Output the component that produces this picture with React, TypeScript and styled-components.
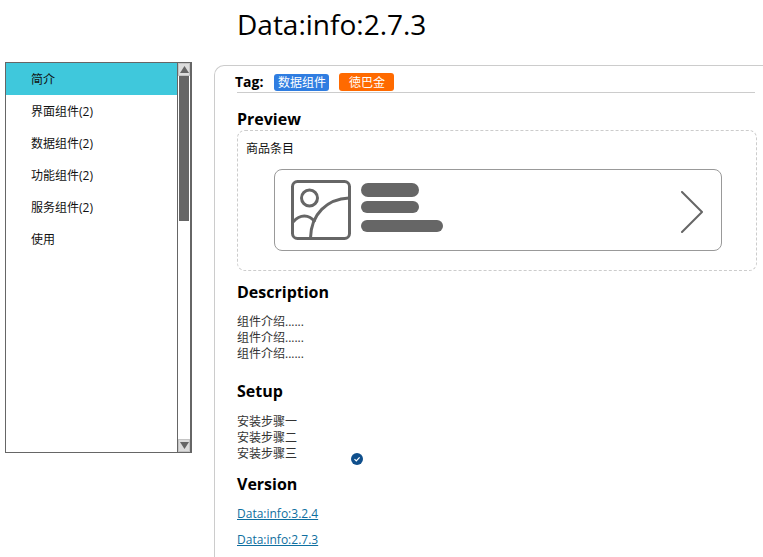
import React from 'react';
import styled, { createGlobalStyle } from 'styled-components';

const GlobalStyle = createGlobalStyle`
  html, body {
    margin: 0;
    padding: 0;
    background: #fff;
    overflow: hidden;
  }
  body {
    font-family: "Open Sans", "Noto Sans CJK SC", sans-serif;
    color: #000;
  }
`;

const Page = styled.div`
  width: 763px;
  height: 557px;
  overflow: hidden;
`;

const PageTitle = styled.h1`
  margin: 0;
  height: 62px;
  padding: 4px 0 0 237px;
  box-sizing: border-box;
  font-size: 28px;
  line-height: 40px;
  font-weight: 400;
`;

const Body = styled.div`
  display: flex;
  align-items: flex-start;
`;

const Sidebar = styled.div`
  display: flex;
  width: 187px;
  height: 391px;
  margin-left: 5px;
  box-sizing: border-box;
  border: 1px solid #666;
  flex-shrink: 0;
`;

const Menu = styled.ul`
  list-style: none;
  margin: 0;
  padding: 0;
  width: 172px;
  box-sizing: border-box;
  flex-shrink: 0;
  border-right: 1px solid #666;
`;

const MenuItem = styled.li<{ $active?: boolean }>`
  height: 32px;
  padding-left: 25px;
  font-size: 12px;
  line-height: 34px;
  color: #111;
  background: ${props => (props.$active ? '#3fc8dc' : 'transparent')};
`;

const Scrollbar = styled.div`
  display: flex;
  flex-direction: column;
  width: 13px;
  box-sizing: border-box;
  flex-shrink: 0;
  border-right: 1px solid #666;
`;

const ScrollButton = styled.div`
  height: 13px;
  flex-shrink: 0;
  background: #dcdcdc;
  border: 1px solid #c4c4c4;
  box-sizing: border-box;
  display: flex;
  align-items: center;
  justify-content: center;
`;

const ScrollThumb = styled.div`
  height: 145px;
  margin: 0 1px;
  background: #666;
  flex-shrink: 0;
`;

const ScrollTrack = styled.div`
  flex: 1;
`;

const Content = styled.main`
  position: relative;
  margin: 3px 0 0 22px;
  width: 560px;
  height: 500px;
  flex-shrink: 0;
  box-sizing: border-box;
  border-left: 1px solid #ccc;
  border-top: 1px solid #ccc;
  border-top-left-radius: 10px;
  padding: 6px 0 0 22px;
`;

const TagRow = styled.div`
  display: flex;
  align-items: center;
  width: 518px;
  height: 20px;
  border-bottom: 1px solid #ccc;
`;

const TagLabel = styled.span`
  font-size: 14px;
  font-weight: 700;
  margin-left: -2px;
  margin-right: 11px;
  line-height: 20px;
`;

const Tag = styled.span<{ $color: string; $tall?: boolean }>`
  display: inline-flex;
  align-items: center;
  justify-content: center;
  width: 55px;
  height: ${props => (props.$tall ? '18px' : '17px')};
  margin-right: 10px;
  border-radius: 3px;
  background: ${props => props.$color};
  color: #fff;
  font-size: 12px;
`;

const SectionTitle = styled.h2<{ $top: number }>`
  margin: ${props => props.$top}px 0 0;
  font-size: 16px;
  line-height: 22px;
  font-weight: 700;
`;

const PreviewBox = styled.div`
  width: 520px;
  height: 141px;
  box-sizing: border-box;
  border: 1px dashed #ccc;
  border-radius: 8px;
  padding: 9px 8px 0;
`;

const PreviewLabel = styled.div`
  font-size: 12px;
  line-height: 17px;
  color: #111;
`;

const ItemCard = styled.div`
  display: flex;
  align-items: center;
  width: 448px;
  height: 82px;
  margin: 12px 0 0 28px;
  box-sizing: border-box;
  border: 1px solid #999;
  border-radius: 8px;
  padding: 0 16px;
`;

const ItemLines = styled.div`
  display: flex;
  flex-direction: column;
  margin: -5px 0 0 10px;
  flex: 1;
`;

const ItemLine = styled.div<{ $w: number; $h: number; $gap: number }>`
  width: ${props => props.$w}px;
  height: ${props => props.$h}px;
  margin-top: ${props => props.$gap}px;
  border-radius: 7px;
  background: #666;
`;

const Chevron = styled.svg`
  margin: 3px 1px 0 0;
`;

const TextBlock = styled.div<{ $top: number }>`
  margin-top: ${props => props.$top}px;
  font-size: 12px;
  line-height: 16px;
  color: #333;
`;

const VersionLink = styled.a`
  display: block;
  width: fit-content;
  margin-top: 10px;
  font-size: 12px;
  line-height: 16px;
  color: #0f6fa0;
  text-decoration: underline;
  &:first-of-type {
    margin-top: 11px;
  }
`;

const CheckBadge = styled.div`
  position: absolute;
  left: 136px;
  top: 387px;
  width: 12px;
  height: 12px;
  border-radius: 50%;
  background: #0f4f8c;
  display: flex;
  align-items: center;
  justify-content: center;
`;

const menu = ['简介', '界面组件(2)', '数据组件(2)', '功能组件(2)', '服务组件(2)', '使用'];

const App: React.FC = () => {
  return (
    <Page>
      <GlobalStyle />
      <PageTitle>Data:info:2.7.3</PageTitle>
      <Body>
        <Sidebar>
          <Menu>
            {menu.map((item, i) => (
              <MenuItem key={item} $active={i === 0}>{item}</MenuItem>
            ))}
          </Menu>
          <Scrollbar>
            <ScrollButton>
              <svg width="9" height="7" viewBox="0 0 9 7"><path d="M4.5 0L9 7H0z" fill="#666" /></svg>
            </ScrollButton>
            <ScrollThumb />
            <ScrollTrack />
            <ScrollButton>
              <svg width="9" height="7" viewBox="0 0 9 7"><path d="M0 0h9L4.5 7z" fill="#666" /></svg>
            </ScrollButton>
          </Scrollbar>
        </Sidebar>
        <Content>
          <TagRow>
            <TagLabel>Tag:</TagLabel>
            <Tag $color="#2f7de1">数据组件</Tag>
            <Tag $color="#ff6a00" $tall>徳巴金</Tag>
          </TagRow>
          <SectionTitle $top={15}>Preview</SectionTitle>
          <PreviewBox>
            <PreviewLabel>商品条目</PreviewLabel>
            <ItemCard>
              <svg width="60" height="60" viewBox="0 0 60 60" fill="none" stroke="#666" strokeWidth="3">
                <rect x="1.5" y="1.5" width="57" height="57" rx="5" />
                <circle cx="18.5" cy="18" r="8" />
                <path d="M58 18C36 19 20 34 19.5 58" />
                <path d="M2 42C9 34 18 34 24 42" />
              </svg>
              <ItemLines>
                <ItemLine $w={58} $h={14} $gap={0} />
                <ItemLine $w={58} $h={12} $gap={4} />
                <ItemLine $w={82} $h={12} $gap={7} />
              </ItemLines>
              <Chevron width="24" height="42" viewBox="0 0 24 42" fill="none" stroke="#666" strokeWidth="2" strokeLinecap="round" strokeLinejoin="round">
                <path d="M2 1l20 20L2 41" />
              </Chevron>
            </ItemCard>
          </PreviewBox>
          <SectionTitle $top={10}>Description</SectionTitle>
          <TextBlock $top={11}>
            <div>组件介绍......</div>
            <div>组件介绍......</div>
            <div>组件介绍......</div>
          </TextBlock>
          <SectionTitle $top={18}>Setup</SectionTitle>
          <TextBlock $top={12}>
            <div>安装步骤一</div>
            <div>安装步骤二</div>
            <div>安装步骤三</div>
          </TextBlock>
          <SectionTitle $top={11}>Version</SectionTitle>
          <VersionLink>Data:info:3.2.4</VersionLink>
          <VersionLink>Data:info:2.7.3</VersionLink>
          <CheckBadge>
            <svg width="8" height="8" viewBox="0 0 8 8" fill="none" stroke="#fff" strokeWidth="1.2"><path d="M1.5 4.2L3.3 6 6.6 2.4" /></svg>
          </CheckBadge>
        </Content>
      </Body>
    </Page>
  );
};

export default App;
